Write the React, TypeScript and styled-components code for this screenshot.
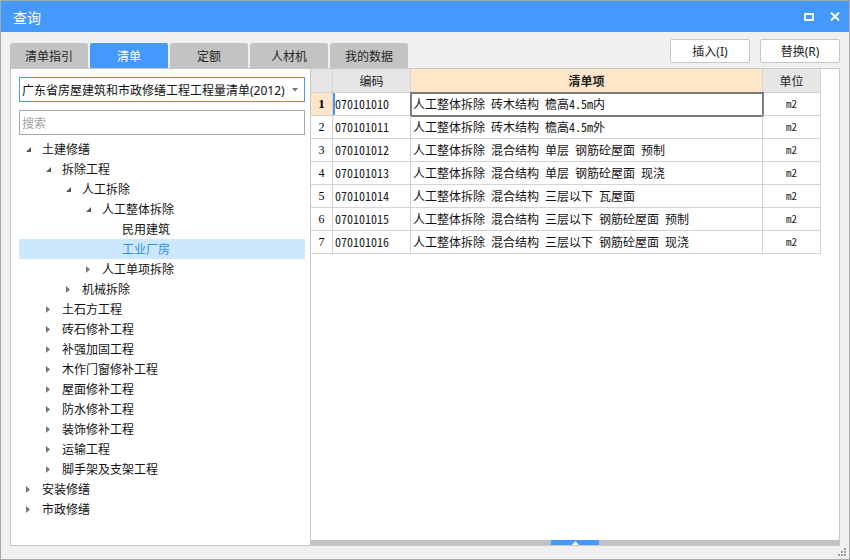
import React from "react";
import styled, { createGlobalStyle } from "styled-components";

const UI = `"Noto Sans", "Noto Sans CJK SC", sans-serif`;
const GRIDFONT = `"Noto Sans Mono CJK SC", "Noto Sans CJK SC", monospace`;

const GlobalStyle = createGlobalStyle`
  html, body { margin: 0; padding: 0; }
  body { width: 850px; height: 560px; overflow: hidden; font-family: ${UI}; }
  * { box-sizing: border-box; }
`;

const Window = styled.div`
  position: relative;
  width: 850px;
  height: 560px;
  display: flex;
  flex-direction: column;
  background: #f0f0f0;
  border: 1px solid #a9a9a9;
`;

const TitleBar = styled.div`
  height: 31px;
  flex: none;
  display: flex;
  align-items: center;
  padding: 0 9px 0 12px;
  background: #4499ff;
  color: #fff;
`;

const Title = styled.div`
  font-size: 14px;
  flex: 1;
`;

const TitleIcons = styled.div`
  display: flex;
  align-items: center;
  gap: 16px;
`;

const Body = styled.div`
  flex: 1;
  display: flex;
  flex-direction: column;
  padding: 0 9px 13px 9px;
`;

const TopRow = styled.div`
  height: 36px;
  flex: none;
  display: flex;
  align-items: flex-start;
`;

const Tabs = styled.div`
  display: flex;
  gap: 2px;
  margin-top: 11px;
  flex: 1;
`;

const Tab = styled.div<{ $active?: boolean }>`
  width: 78px;
  height: 25px;
  display: flex;
  align-items: center;
  justify-content: center;
  font-size: 12px;
  border-radius: 2px 2px 0 0;
  background: ${(p) => (p.$active ? "#4499ff" : "#c3c3c3")};
  color: ${(p) => (p.$active ? "#fff" : "#262626")};
`;

const Buttons = styled.div`
  display: flex;
  gap: 10px;
  margin-top: 7px;
`;

const Button = styled.div`
  width: 80px;
  height: 24px;
  display: flex;
  align-items: center;
  justify-content: center;
  background: #fff;
  border: 1px solid #c6c6c6;
  border-radius: 2px;
  font-size: 12px;
  color: #222;
`;

const Content = styled.div`
  height: 478px;
  flex: none;
  display: flex;
`;

const LeftPanel = styled.div`
  width: 301px;
  flex: none;
  background: #fff;
  border: 1px solid #c8c8c8;
  padding: 8px 5px 0 8px;
  display: flex;
  flex-direction: column;
`;

const Select = styled.div`
  height: 25px;
  border: 1px solid #4a9cf6;
  display: flex;
  align-items: center;
  padding: 0 6px 0 2px;
  font-size: 12px;
  color: #111;
  white-space: nowrap;
`;

const SelectText = styled.span`
  flex: 1;
`;

const SearchBox = styled.div`
  margin-top: 8px;
  height: 25px;
  border: 1px solid #a8a8a8;
  display: flex;
  align-items: center;
  padding-left: 2px;
  font-size: 12px;
  color: #a3a3a3;
`;

const Tree = styled.div`
  margin-top: 4px;
  display: flex;
  flex-direction: column;
`;

const TreeRow = styled.div<{ $level: number; $selected?: boolean }>`
  height: 20px;
  display: flex;
  align-items: center;
  padding-left: ${(p) => p.$level * 20}px;
  background: ${(p) => (p.$selected ? "#cce8ff" : "transparent")};
  color: ${(p) => (p.$selected ? "#2f8cf0" : "#111")};
  font-size: 12px;
  white-space: nowrap;
`;

const Toggle = styled.span`
  width: 23px;
  height: 20px;
  flex: none;
  display: flex;
  align-items: center;
  padding-left: 7px;
`;

const RightPanel = styled.div`
  flex: 1;
  background: #fff;
  border: 1px solid #c8c8c8;
  border-left: none;
  display: flex;
  flex-direction: column;
`;

const TableArea = styled.div`
  flex: 1;
`;

const Grid = styled.div`
  display: grid;
  width: 510px;
  grid-template-columns: 22px 78px 352px 58px;
  grid-template-rows: 24px;
  grid-auto-rows: 23px;
`;

const CellBase = styled.div`
  border-right: 1px solid #d4d4d4;
  border-bottom: 1px solid #d4d4d4;
  display: flex;
  align-items: center;
  white-space: nowrap;
  overflow: hidden;
  font-size: 12px;
  color: #000;
`;

const HeadCell = styled(CellBase)<{ $accent?: boolean }>`
  justify-content: center;
  background: ${(p) => (p.$accent ? "#ffe6c8" : "#e6e6e6")};
  font-weight: ${(p) => (p.$accent ? 700 : 400)};
  color: #222;
`;

const NumCell = styled(CellBase)<{ $active?: boolean }>`
  justify-content: center;
  font-family: "Liberation Serif", serif;
  font-size: ${(p) => (p.$active ? 13 : 12)}px;
  font-weight: ${(p) => (p.$active ? 700 : 400)};
  background: ${(p) => (p.$active ? "#ffe6c8" : "#fff")};
`;

const CodeCell = styled(CellBase)<{ $current?: boolean }>`
  padding: 0 0 2px 2px;
  font-family: ${GRIDFONT};
  color: #1a1a1a;
  box-shadow: ${(p) => (p.$current ? "inset 2px 0 0 #4499ff" : "none")};
`;

const ItemCell = styled(CellBase)<{ $focused?: boolean }>`
  padding: 0 0 2px 2px;
  font-family: ${GRIDFONT};
  color: #111;
  outline: ${(p) => (p.$focused ? "2px solid #7b7b7b" : "none")};
  outline-offset: -1px;
`;

const UnitCell = styled(CellBase)`
  justify-content: center;
  padding-bottom: 2px;
  font-family: ${GRIDFONT};
  font-size: 11px;
  color: #1a1a1a;
`;

const Splitter = styled.div`
  height: 5px;
  flex: none;
  background: #c1c1c1;
  display: flex;
  justify-content: center;
`;

const SplitThumb = styled.div`
  width: 48px;
  height: 5px;
  background: #4499ff;
  display: flex;
  align-items: center;
  justify-content: center;
`;

const Grip = styled.svg`
  position: absolute;
  right: 2px;
  bottom: 2px;
`;

type Node = { label: string; level: number; state: "open" | "closed" | "leaf"; selected?: boolean };

const tree: Node[] = [
  { label: "土建修缮", level: 0, state: "open" },
  { label: "拆除工程", level: 1, state: "open" },
  { label: "人工拆除", level: 2, state: "open" },
  { label: "人工整体拆除", level: 3, state: "open" },
  { label: "民用建筑", level: 4, state: "leaf" },
  { label: "工业厂房", level: 4, state: "leaf", selected: true },
  { label: "人工单项拆除", level: 3, state: "closed" },
  { label: "机械拆除", level: 2, state: "closed" },
  { label: "土石方工程", level: 1, state: "closed" },
  { label: "砖石修补工程", level: 1, state: "closed" },
  { label: "补强加固工程", level: 1, state: "closed" },
  { label: "木作门窗修补工程", level: 1, state: "closed" },
  { label: "屋面修补工程", level: 1, state: "closed" },
  { label: "防水修补工程", level: 1, state: "closed" },
  { label: "装饰修补工程", level: 1, state: "closed" },
  { label: "运输工程", level: 1, state: "closed" },
  { label: "脚手架及支架工程", level: 1, state: "closed" },
  { label: "安装修缮", level: 0, state: "closed" },
  { label: "市政修缮", level: 0, state: "closed" },
];

const rows = [
  ["070101010", "人工整体拆除 砖木结构 檐高4.5m内"],
  ["070101011", "人工整体拆除 砖木结构 檐高4.5m外"],
  ["070101012", "人工整体拆除 混合结构 单层 钢筋砼屋面 预制"],
  ["070101013", "人工整体拆除 混合结构 单层 钢筋砼屋面 现浇"],
  ["070101014", "人工整体拆除 混合结构 三层以下 瓦屋面"],
  ["070101015", "人工整体拆除 混合结构 三层以下 钢筋砼屋面 预制"],
  ["070101016", "人工整体拆除 混合结构 三层以下 钢筋砼屋面 现浇"],
];

const ExpandedIcon = () => (
  <svg width="5" height="5" viewBox="0 0 5 5">
    <polygon points="5,0 5,5 0,5" fill="#5a5a5a" />
  </svg>
);

const CollapsedIcon = () => (
  <svg width="4" height="7" viewBox="0 0 4 7">
    <polygon points="0,0 4,3.5 0,7" fill="#777" />
  </svg>
);

export default function App() {
  return (
    <>
      <GlobalStyle />
      <Window>
        <TitleBar>
          <Title>查询</Title>
          <TitleIcons>
            <svg width="10" height="8" viewBox="0 0 10 8">
              <rect x="1" y="1" width="8" height="6" fill="none" stroke="#fff" strokeWidth="2" />
            </svg>
            <svg width="10" height="9" viewBox="0 0 10 9">
              <path d="M1 0.5 L9 8.5 M9 0.5 L1 8.5" stroke="#fff" strokeWidth="2" />
            </svg>
          </TitleIcons>
        </TitleBar>
        <Body>
          <TopRow>
            <Tabs>
              <Tab>清单指引</Tab>
              <Tab $active>清单</Tab>
              <Tab>定额</Tab>
              <Tab>人材机</Tab>
              <Tab>我的数据</Tab>
            </Tabs>
            <Buttons>
              <Button>插入(I)</Button>
              <Button>替换(R)</Button>
            </Buttons>
          </TopRow>
          <Content>
            <LeftPanel>
              <Select>
                <SelectText>广东省房屋建筑和市政修缮工程工程量清单(2012)</SelectText>
                <svg width="6" height="4" viewBox="0 0 6 4">
                  <polygon points="0,0 6,0 3,3.5" fill="#777" />
                </svg>
              </Select>
              <SearchBox>搜索</SearchBox>
              <Tree>
                {tree.map((n) => (
                  <TreeRow key={n.label} $level={n.level} $selected={n.selected}>
                    <Toggle>
                      {n.state === "open" && <ExpandedIcon />}
                      {n.state === "closed" && <CollapsedIcon />}
                    </Toggle>
                    {n.label}
                  </TreeRow>
                ))}
              </Tree>
            </LeftPanel>
            <RightPanel>
              <TableArea>
                <Grid>
                  <HeadCell />
                  <HeadCell>编码</HeadCell>
                  <HeadCell $accent>清单项</HeadCell>
                  <HeadCell>单位</HeadCell>
                  {rows.map(([code, item], i) => (
                    <React.Fragment key={code}>
                      <NumCell $active={i === 0}>{i + 1}</NumCell>
                      <CodeCell $current={i === 0}>{code}</CodeCell>
                      <ItemCell $focused={i === 0}>{item}</ItemCell>
                      <UnitCell>m2</UnitCell>
                    </React.Fragment>
                  ))}
                </Grid>
              </TableArea>
              <Splitter>
                <SplitThumb>
                  <svg width="7" height="4" viewBox="0 0 7 4">
                    <polygon points="3.5,0 7,4 0,4" fill="#fff" />
                  </svg>
                </SplitThumb>
              </Splitter>
            </RightPanel>
          </Content>
        </Body>
        <Grip width="9" height="9" viewBox="0 0 9 9">
          <rect x="6" y="0" width="2" height="2" fill="#9a9a9a" />
          <rect x="3" y="3" width="2" height="2" fill="#9a9a9a" />
          <rect x="6" y="3" width="2" height="2" fill="#9a9a9a" />
          <rect x="0" y="6" width="2" height="2" fill="#9a9a9a" />
          <rect x="3" y="6" width="2" height="2" fill="#9a9a9a" />
          <rect x="6" y="6" width="2" height="2" fill="#9a9a9a" />
        </Grip>
      </Window>
    </>
  );
}
